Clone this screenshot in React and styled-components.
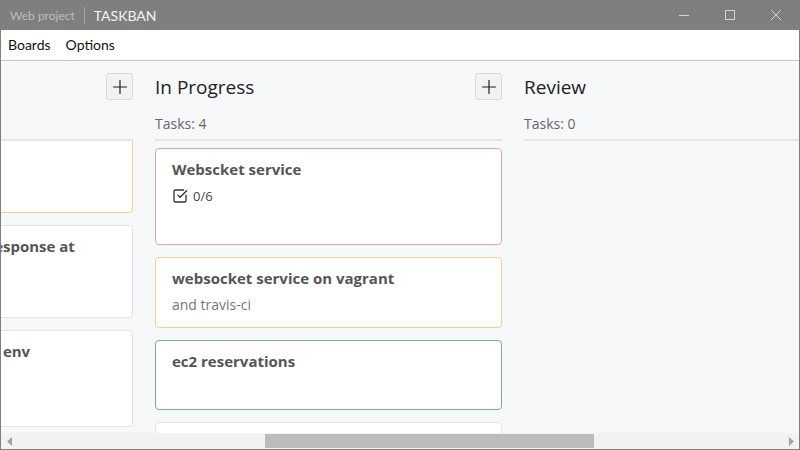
import React, { useLayoutEffect, useRef } from 'react';
import styled, { createGlobalStyle } from 'styled-components';
import { SquareCheckBig, Plus } from 'lucide-react';

const GlobalStyle = createGlobalStyle`
  * { box-sizing: border-box; }
  html, body {
    margin: 0;
    padding: 0;
    width: 800px;
    height: 450px;
    overflow: hidden;
  }
  body {
    font-family: "Open Sans", "Noto Sans", sans-serif;
  }
`;

const COLUMN_WIDTH = 347;
const COLUMN_GAP = 22;
const BOARD_PAD = 13;
const SCROLL_LEFT = 597;
const ARROW_WIDTH = 17;

const accents = {
  red: '#e6a3a3',
  yellow: '#f0d08c',
  green: '#7eae7e',
  none: '#e3e3e3',
};

const columns = [
  {
    title: 'Backlog',
    cards: [
      { title: 'Rate limiting for public API', accent: 'none' },
      { title: 'Dark theme', accent: 'green' },
    ],
  },
  {
    title: 'To Do',
    offset: 32,
    cards: [
      { title: 'Fix login redirect', checklist: '1/2', accent: 'yellow' },
      { title: 'Investigate slow servers response at checkout', note: 'k6 test', accent: 'none' },
      { title: 'Configure the new staging env', checklist: '0/3', accent: 'none' },
      { title: 'Update README', accent: 'none' },
      { title: 'Backup cron job', accent: 'green' },
    ],
  },
  {
    title: 'In Progress',
    cards: [
      { title: 'Webscket service', checklist: '0/6', accent: 'red' },
      { title: 'websocket service on vagrant', note: 'and travis-ci', accent: 'yellow' },
      { title: 'ec2 reservations', accent: 'green' },
      { title: 'nginx config', accent: 'none' },
    ],
  },
  { title: 'Review', cards: [] },
  { title: 'Done', cards: [{ title: 'Project setup', accent: 'green' }] },
];

const Window = styled.div`
  width: 800px;
  height: 450px;
  display: flex;
  flex-direction: column;
  background: #7f7f7f;
  padding: 0 1px 1px;
`;

const TitleBar = styled.div`
  height: 30px;
  flex: none;
  display: flex;
  align-items: center;
  padding-left: 9px;
  font-family: Lato, "Open Sans", sans-serif;
  color: #f2f2f2;
`;

const ProjectName = styled.span`
  font-size: 12px;
  color: #bdbdbd;
`;

const TitleDivider = styled.span`
  width: 1px;
  height: 17px;
  background: #a9a9a9;
  margin: 0 9px;
`;

const AppName = styled.span`
  font-size: 14px;
`;

const WindowControls = styled.div`
  margin-left: auto;
  display: flex;
  height: 100%;
`;

const ControlButton = styled.div`
  width: 46px;
  height: 30px;
  display: grid;
  place-items: center;
`;

const MenuBar = styled.div`
  height: 31px;
  flex: none;
  display: flex;
  align-items: center;
  gap: 15px;
  padding: 0 0 1px 7px;
  background: #ffffff;
  border-bottom: 1px solid #c4c4c4;
  font-family: Lato, "Open Sans", sans-serif;
`;

const MenuItem = styled.span`
  font-size: 14px;
  color: #111;
`;

const Board = styled.div`
  flex: 1;
  min-height: 0;
  overflow: hidden;
  background: #f7f8fa;
`;

const BoardTrack = styled.div`
  display: flex;
  gap: ${COLUMN_GAP}px;
  padding: 0 ${BOARD_PAD}px;
  width: max-content;
  height: 100%;
`;

const ColumnBox = styled.section`
  width: ${COLUMN_WIDTH}px;
  flex: none;
  display: flex;
  flex-direction: column;
  height: 100%;
`;

const ColumnHeader = styled.div`
  display: flex;
  align-items: center;
  justify-content: space-between;
  height: 27px;
  margin-top: 12px;
`;

const ColumnTitle = styled.h2`
  margin: 0;
  font-size: 19px;
  font-weight: 400;
  color: #222;
`;

const AddButton = styled.button`
  width: 27px;
  height: 27px;
  padding: 0;
  display: grid;
  place-items: center;
  border: 1px solid #dadada;
  border-radius: 3px;
  background: #f1f2f3;
  color: #1e1e1e;
`;

const TaskCount = styled.div`
  margin-top: 14px;
  padding-bottom: 5px;
  font-size: 14px;
  line-height: 20px;
  color: #666;
  border-bottom: 2px solid #e4e6e9;
`;

const ListViewport = styled.div`
  flex: 1;
  min-height: 0;
  overflow: hidden;
`;

const CardStack = styled.div`
  display: flex;
  flex-direction: column;
  gap: 12px;
  padding-top: 7px;
`;

const Card = styled.article`
  flex: none;
  min-height: 70px;
  padding: 9px 16px 12px;
  background: #ffffff;
  border: 1px solid ${({ $accent }) => accents[$accent]};
  border-radius: 4px;
`;

const CardTitle = styled.h3`
  margin: 0;
  font-size: 15px;
  line-height: 22px;
  font-weight: 700;
  color: #555;
`;

const CardNote = styled.p`
  margin: 6px 0 0;
  font-size: 14px;
  line-height: 20px;
  color: #777;
`;

const Checklist = styled.div`
  display: flex;
  align-items: center;
  gap: 5px;
  height: 18px;
  margin: 7px 0 27px;
  font-size: 13px;
  color: #444;
`;

const ScrollBar = styled.div`
  height: 16px;
  flex: none;
  display: flex;
  align-items: center;
  background: #f2f2f2;
`;

const ScrollArrow = styled.div`
  width: ${ARROW_WIDTH}px;
  height: 100%;
  flex: none;
  display: grid;
  place-items: center;
`;

const ScrollTrack = styled.div`
  flex: 1;
  height: 100%;
  position: relative;
`;

const ScrollThumb = styled.div`
  position: absolute;
  top: 1px;
  bottom: 1px;
  background: #bcbcbc;
`;

function CardList({ offset = 0, children }) {
  const ref = useRef(null);
  useLayoutEffect(() => {
    if (ref.current) ref.current.scrollTop = offset;
  }, [offset]);
  return (
    <ListViewport ref={ref}>
      <CardStack>{children}</CardStack>
    </ListViewport>
  );
}

function TaskCard({ card }) {
  return (
    <Card $accent={card.accent}>
      <CardTitle>{card.title}</CardTitle>
      {card.checklist && (
        <Checklist>
          <SquareCheckBig size={16} strokeWidth={2} color="#333" />
          {card.checklist}
        </Checklist>
      )}
      {card.note && <CardNote>{card.note}</CardNote>}
    </Card>
  );
}

function Column({ column }) {
  return (
    <ColumnBox>
      <ColumnHeader>
        <ColumnTitle>{column.title}</ColumnTitle>
        <AddButton aria-label="Add task">
          <Plus size={22} strokeWidth={1.3} />
        </AddButton>
      </ColumnHeader>
      <TaskCount>Tasks: {column.cards.length}</TaskCount>
      <CardList offset={column.offset}>
        {column.cards.map((card) => (
          <TaskCard key={card.title} card={card} />
        ))}
      </CardList>
    </ColumnBox>
  );
}

export default function App() {
  const boardRef = useRef(null);

  useLayoutEffect(() => {
    if (boardRef.current) boardRef.current.scrollLeft = SCROLL_LEFT;
  }, []);

  const viewWidth = 798;
  const contentWidth =
    BOARD_PAD * 2 + columns.length * COLUMN_WIDTH + (columns.length - 1) * COLUMN_GAP;
  const trackWidth = viewWidth - ARROW_WIDTH * 2;
  const thumbWidth = (trackWidth * viewWidth) / contentWidth;
  const thumbLeft = (trackWidth * SCROLL_LEFT) / contentWidth;

  return (
    <>
      <GlobalStyle />
      <Window>
        <TitleBar>
          <ProjectName>Web project</ProjectName>
          <TitleDivider />
          <AppName>TASKBAN</AppName>
          <WindowControls>
            <ControlButton>
              <svg width="12" height="12" viewBox="0 0 12 12">
                <path d="M1 6.5h10" stroke="#d4d4d4" strokeWidth="1" />
              </svg>
            </ControlButton>
            <ControlButton>
              <svg width="12" height="12" viewBox="0 0 12 12">
                <rect x="1.5" y="1.5" width="9" height="9" fill="none" stroke="#d4d4d4" strokeWidth="1" />
              </svg>
            </ControlButton>
            <ControlButton>
              <svg width="12" height="12" viewBox="0 0 12 12">
                <path d="M1 1l10 10M11 1L1 11" stroke="#d4d4d4" strokeWidth="1" />
              </svg>
            </ControlButton>
          </WindowControls>
        </TitleBar>
        <MenuBar>
          <MenuItem>Boards</MenuItem>
          <MenuItem>Options</MenuItem>
        </MenuBar>
        <Board ref={boardRef}>
          <BoardTrack>
            {columns.map((column) => (
              <Column key={column.title} column={column} />
            ))}
          </BoardTrack>
        </Board>
        <ScrollBar>
          <ScrollArrow>
            <svg width="6" height="9" viewBox="0 0 6 9">
              <path d="M5 0v9L0 4.5z" fill="#a3a3a3" />
            </svg>
          </ScrollArrow>
          <ScrollTrack>
            <ScrollThumb style={{ left: thumbLeft, width: thumbWidth }} />
          </ScrollTrack>
          <ScrollArrow>
            <svg width="6" height="9" viewBox="0 0 6 9">
              <path d="M1 0v9L6 4.5z" fill="#a3a3a3" />
            </svg>
          </ScrollArrow>
        </ScrollBar>
      </Window>
    </>
  );
}
